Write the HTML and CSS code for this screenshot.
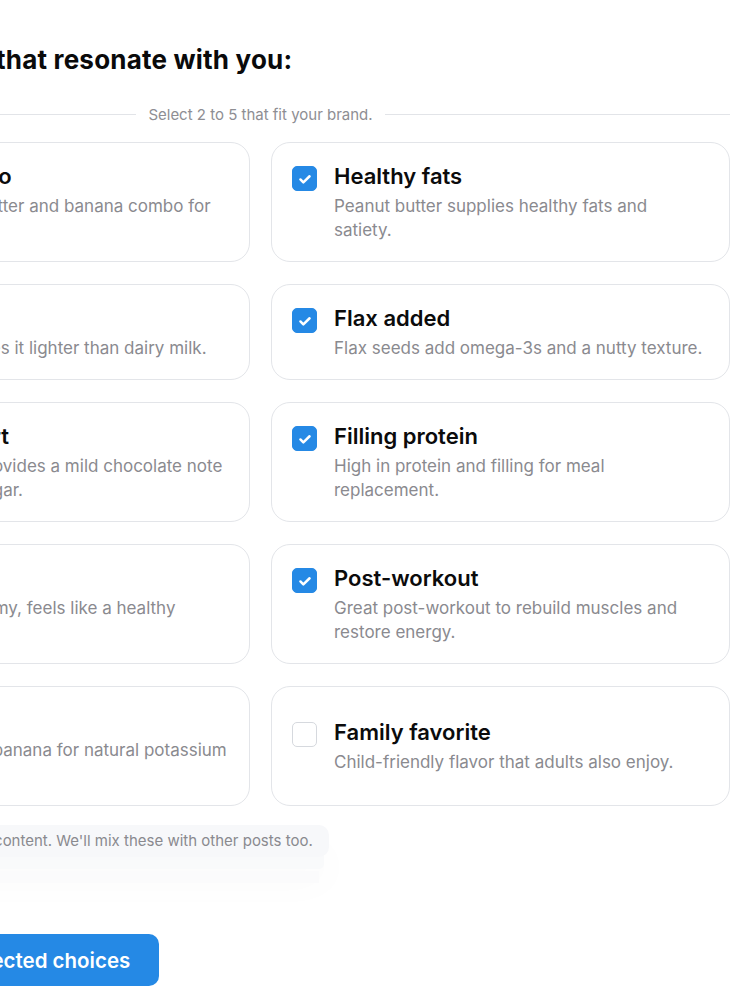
FILE: index.html
```html
<!DOCTYPE html>
<html lang="en">
<head>
<meta charset="utf-8">
<title>Benefits</title>
<link rel="stylesheet" href="styles.css">
</head>
<body>
<main class="page">
  <h1 class="heading">Select the ones that resonate with you:</h1>
  <div class="divider"><span class="divider-text">Select 2 to 5 that fit your brand.</span></div>
  <div class="grid">
    <label class="card">
      <span class="row"><span class="box"></span>
      <span class="body"><span class="title">Classic PB duo</span><span class="desc">Classic peanut butter and banana combo for lasting energy.</span></span></span>
    </label>
    <label class="card">
      <span class="row"><span class="box on"><svg viewBox="0 0 24 24"><path d="M7 12.5l3.2 3.2L17 9"/></svg></span>
      <span class="body"><span class="title">Healthy fats</span><span class="desc">Peanut butter supplies healthy fats and satiety.</span></span></span>
    </label>
    <label class="card">
      <span class="row"><span class="box"></span>
      <span class="body"><span class="title">Almond milk</span><span class="desc">Almond milk makes it lighter than dairy milk.</span></span></span>
    </label>
    <label class="card">
      <span class="row"><span class="box on"><svg viewBox="0 0 24 24"><path d="M7 12.5l3.2 3.2L17 9"/></svg></span>
      <span class="body"><span class="title">Flax added</span><span class="desc">Flax seeds add omega-3s and a nutty texture.</span></span></span>
    </label>
    <label class="card">
      <span class="row"><span class="box"></span>
      <span class="body"><span class="title">Cocoa dessert</span><span class="desc">Cocoa powder provides a mild chocolate note without added sugar.</span></span></span>
    </label>
    <label class="card">
      <span class="row"><span class="box on"><svg viewBox="0 0 24 24"><path d="M7 12.5l3.2 3.2L17 9"/></svg></span>
      <span class="body"><span class="title">Filling protein</span><span class="desc">High in protein and filling for meal replacement.</span></span></span>
    </label>
    <label class="card">
      <span class="row"><span class="box"></span>
      <span class="body"><span class="title">Creamy treat</span><span class="desc">So thick and creamy, feels like a healthy dessert.</span></span></span>
    </label>
    <label class="card">
      <span class="row"><span class="box on"><svg viewBox="0 0 24 24"><path d="M7 12.5l3.2 3.2L17 9"/></svg></span>
      <span class="body"><span class="title">Post-workout</span><span class="desc">Great post-workout to rebuild muscles and restore energy.</span></span></span>
    </label>
    <label class="card">
      <span class="row"><span class="box"></span>
      <span class="body"><span class="title">Ripe banana</span><span class="desc">Made with a ripe banana for natural potassium and sweetness.</span></span></span>
    </label>
    <label class="card">
      <span class="row"><span class="box"></span>
      <span class="body"><span class="title">Family favorite</span><span class="desc">Child-friendly flavor that adults also enjoy.</span></span></span>
    </label>
  </div>
  <p class="note">These help us shape your content. We'll mix these with other posts too.</p>
  <button class="cta" type="button">Continue with selected choices</button>
</main>
</body>
</html>
```
FILE: styles.css
```css
* { box-sizing: border-box; }
html, body { margin: 0; padding: 0; background: #ffffff; overflow: hidden; }
body {
  font-family: Inter, "Noto Sans", "Liberation Sans", sans-serif;
  color: #0b0b0c;
  -webkit-font-smoothing: antialiased;
}
.page {
  width: 939px;
  margin-left: -209px;
  padding-top: 44px;
  display: flex;
  flex-direction: column;
}
.heading {
  margin: 0;
  font-size: 26px;
  line-height: 32px;
  font-weight: 700;
  letter-spacing: 0.2px;
  color: #0a0a0b;
}
.divider {
  margin-top: 28px;
  display: flex;
  align-items: center;
  gap: 12px;
  height: 20px;
}
.divider::before, .divider::after {
  content: "";
  flex: 1;
  height: 1px;
  background: #e2e4e8;
}
.divider-text {
  font-size: 15px;
  color: #8e8e93;
}
.grid {
  margin-top: 18px;
  display: grid;
  grid-template-columns: 1fr 1fr;
  column-gap: 21px;
  row-gap: 22px;
}
.card {
  display: flex;
  flex-direction: column;
  justify-content: center;
  padding: 19px 21px 19px 20px;
  border: 1px solid #e3e5e9;
  border-radius: 19px;
  background: #fff;
}
.row {
  display: flex;
  align-items: flex-start;
  gap: 17px;
}
.box {
  flex: none;
  width: 25px;
  height: 25px;
  margin-top: 4px;
  border-radius: 5px;
  border: 1px solid #d6d9de;
  display: flex;
  align-items: center;
  justify-content: center;
}
.box.on {
  background: #2589e5;
  border-color: #2589e5;
}
.box svg {
  width: 22px;
  height: 22px;
  fill: none;
  stroke: #fff;
  stroke-width: 2.7;
  stroke-linecap: round;
  stroke-linejoin: round;
}
.body {
  display: flex;
  flex-direction: column;
  gap: 4px;
  min-width: 0;
}
.title {
  font-size: 22px;
  line-height: 28px;
  font-weight: 600;
  color: #0b0b0c;
}
.desc {
  font-size: 17px;
  line-height: 24px;
  color: #8a8a8f;
}
.note {
  align-self: flex-start;
  margin: 19px 0 0;
  padding: 6px 16px;
  font-size: 15px;
  line-height: 20px;
  color: #8a8a8f;
  background: #f7f8fa;
  border-radius: 10px;
  box-shadow: 0 17px 0 -5px #f9fafb, 0 36px 0 -10px #fbfbfc, 0 26px 40px rgba(0,0,0,0.025);
}
.cta {
  align-self: flex-start;
  margin-top: 77px;
  height: 52px;
  padding: 0 29px;
  border: none;
  border-radius: 10px;
  background: #2589e5;
  color: #fff;
  font-family: inherit;
  font-size: 20.5px;
  font-weight: 600;
}
```
